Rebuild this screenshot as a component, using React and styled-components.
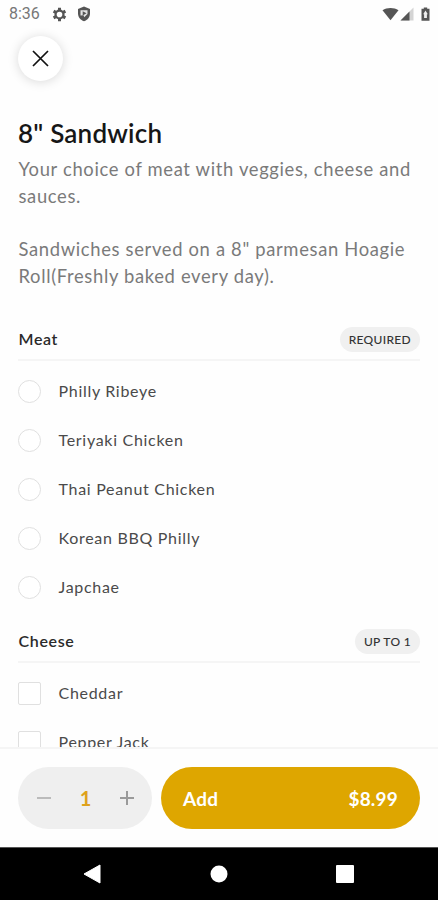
import React, { useState } from 'react';
import styled, { createGlobalStyle } from 'styled-components';

const meats = [
  'Philly Ribeye',
  'Teriyaki Chicken',
  'Thai Peanut Chicken',
  'Korean BBQ Philly',
  'Japchae',
];

const cheeses = ['Cheddar', 'Pepper Jack'];

const PRICE = 8.99;

const GlobalStyle = createGlobalStyle`
  * {
    box-sizing: border-box;
  }

  body {
    margin: 0;
    background: #fefefe;
    font-family: Lato, 'Liberation Sans', sans-serif;
  }

  button {
    border: 0;
    padding: 0;
    background: none;
    font-family: inherit;
    cursor: pointer;
  }
`;

const Screen = styled.div`
  display: flex;
  flex-direction: column;
  height: 900px;
  overflow: hidden;
  background: #fefefe;
`;

const StatusBar = styled.div`
  display: flex;
  align-items: center;
  justify-content: space-between;
  flex: none;
  height: 28px;
  padding: 0 8px 0 9px;
  color: #555;
`;

const StatusGroup = styled.div`
  display: flex;
  align-items: center;
  gap: ${({ $gap }) => $gap}px;
`;

const Clock = styled.span`
  width: 32px;
  font-family: Roboto, sans-serif;
  font-size: 16px;
  line-height: 30px;
  color: #777;
`;

const Content = styled.main`
  flex: 1;
  min-height: 0;
  padding: 8px 18px 0;
  overflow: hidden;
`;

const CloseButton = styled.button`
  display: flex;
  align-items: center;
  justify-content: center;
  width: 45px;
  height: 45px;
  border-radius: 50%;
  background: #fff;
  box-shadow: 0 1px 11px rgba(0, 0, 0, 0.15);
`;

const Title = styled.h1`
  margin: 35px 0 0;
  font-size: 26px;
  font-weight: 600;
  line-height: 34px;
  letter-spacing: 0.2px;
  color: #161616;
`;

const Description = styled.p`
  margin: 6px -6px 0 0.5px;
  font-size: 18.4px;
  line-height: 26.8px;
  letter-spacing: 0.66px;
  white-space: pre-line;
  color: #7a7a7a;
`;

const SectionHeader = styled.div`
  display: flex;
  align-items: center;
  justify-content: space-between;
  height: 41px;
  margin-top: ${({ $top }) => $top}px;
  border-bottom: 2px solid #f5f5f5;
`;

const SectionTitle = styled.h2`
  margin: -1px 0 0 0.5px;
  font-size: 16px;
  font-weight: 600;
  letter-spacing: 0.65px;
  color: #2a2a2a;
`;

const Badge = styled.span`
  display: flex;
  align-items: center;
  height: 25px;
  padding: 0 9px;
  border-radius: 13px;
  background: #f0f0f0;
  font-size: 12px;
  font-weight: 500;
  letter-spacing: 0.32px;
  color: #333;
`;

const OptionList = styled.div`
  padding-top: 6px;
  margin-bottom: 1px;
`;

const OptionRow = styled.label`
  display: flex;
  align-items: center;
  height: 49px;
  cursor: pointer;
`;

const OptionName = styled.span`
  padding-bottom: 2px;
  font-size: 16px;
  letter-spacing: 0.7px;
  color: #4a4a4a;
`;

const Control = styled.input`
  appearance: none;
  flex: none;
  width: 23px;
  height: 23px;
  margin: 0 17.5px 0 0;
  border: 1.5px solid #e0e0e0;
  border-radius: ${({ type }) => (type === 'radio' ? '50%' : '2px')};
  background: #fff;

  &:checked {
    border: 6px solid #dea600;
  }
`;

const Footer = styled.footer`
  display: flex;
  gap: 9px;
  flex: none;
  height: 100px;
  padding: 18px 18px 0;
  border-top: 2px solid #f5f5f5;
`;

const Stepper = styled.div`
  display: flex;
  align-items: center;
  justify-content: space-between;
  width: 134px;
  height: 62px;
  padding: 0 17px 0 18px;
  border-radius: 31px;
  background: #efefef;
`;

const StepButton = styled.button`
  display: flex;
  color: ${({ $muted }) => ($muted ? '#bbb' : '#9a9a9a')};
`;

const Quantity = styled.span`
  font-size: 20px;
  font-weight: 700;
  color: #dea21c;
`;

const AddButton = styled.button`
  display: flex;
  flex: 1;
  align-items: center;
  justify-content: space-between;
  height: 62px;
  padding: 0 22px;
  border-radius: 31px;
  background: #dea600;
  font-size: 19px;
  font-weight: 700;
  letter-spacing: 0.2px;
  color: #fff;
`;

const NavBar = styled.nav`
  display: flex;
  align-items: center;
  justify-content: space-between;
  flex: none;
  height: 53px;
  padding: 0 84px 0 83px;
  border-top: 1px solid #555;
  background: #000;
`;

const GearIcon = () => (
  <svg width="15" height="15" viewBox="0 0 16 16" fill="none" stroke="currentColor">
    <circle cx="8" cy="8" r="4.2" strokeWidth="2.4" />
    <path
      d="M8 .8v3M8 12.200v3M1.700 4.400l2.800 1.600M11.500 10l2.800 1.600M1.700 11.600l2.800-1.600M11.500 6l2.800-1.600"
      strokeWidth="3.2"
    />
  </svg>
);

const ShieldIcon = () => (
  <svg width="14" height="16" viewBox="0 0 14 16">
    <path d="M7 .6l6 2.300v4.600c0 3.600-2.400 6.400-6 7.800-3.600-1.400-6-4.200-6-7.800V2.900z" fill="currentColor" />
    <path d="M3.500 4.200h7v3.800L7.300 11.300l-.8-2.100-3 .2z" fill="#e4e4e4" />
    <path d="M5.700 5.200l3.800 2-3.800 2.300z" fill="currentColor" />
  </svg>
);

const WifiIcon = () => (
  <svg width="17" height="14" viewBox="0 0 17 14" fill="currentColor">
    <path d="M.5 3.300C5 .2 12 .2 16.500 3.300L8.500 13.300z" />
  </svg>
);

const SignalIcon = () => (
  <svg width="14" height="14" viewBox="0 0 14 14">
    <path d="M13.500.5v13H.5z" fill="#d4d4d4" />
    <path d="M9.500 4.500v9H.5z" fill="currentColor" />
  </svg>
);

const BatteryIcon = () => (
  <svg width="9" height="14" viewBox="0 0 9 14">
    <path d="M2.800.5h3.400v1.300H8.500v12H.5v-12h2.300z" fill="currentColor" />
    <path d="M4.500 3.500L6.800 7.300H5.900v3.700H3.100V7.300H2.200z" fill="#eee" />
  </svg>
);

const Options = ({ name, type, items }) => (
  <OptionList>
    {items.map(item => (
      <OptionRow key={item}>
        <Control type={type} name={name} />
        <OptionName>{item}</OptionName>
      </OptionRow>
    ))}
  </OptionList>
);

const App = () => {
  const [quantity, setQuantity] = useState(1);

  return (
    <Screen>
      <GlobalStyle />
      <StatusBar>
        <StatusGroup $gap={11}>
          <Clock>8:36</Clock>
          <StatusGroup $gap={10}>
            <GearIcon />
            <ShieldIcon />
          </StatusGroup>
        </StatusGroup>
        <StatusGroup $gap={7}>
          <StatusGroup $gap={1}>
            <WifiIcon />
            <SignalIcon />
          </StatusGroup>
          <BatteryIcon />
        </StatusGroup>
      </StatusBar>

      <Content>
        <CloseButton aria-label="Close">
          <svg width="17" height="17" viewBox="0 0 17 17" stroke="#111" strokeWidth="1.7">
            <path d="M1 1l15 15M16 1L1 16" />
          </svg>
        </CloseButton>
        <Title>8&quot; Sandwich</Title>
        <Description>
          {'Your choice of meat with veggies, cheese and sauces.\n\nSandwiches served on a 8" parmesan Hoagie Roll(Freshly baked every day).'}
        </Description>

        <SectionHeader $top={30}>
          <SectionTitle>Meat</SectionTitle>
          <Badge>REQUIRED</Badge>
        </SectionHeader>
        <Options name="meat" type="radio" items={meats} />

        <SectionHeader $top={10}>
          <SectionTitle>Cheese</SectionTitle>
          <Badge>UP TO 1</Badge>
        </SectionHeader>
        <Options name="cheese" type="checkbox" items={cheeses} />
      </Content>

      <Footer>
        <Stepper>
          <StepButton
            $muted={quantity === 1}
            aria-label="Remove one"
            onClick={() => setQuantity(Math.max(1, quantity - 1))}
          >
            <svg width="16" height="16" viewBox="0 0 16 16" stroke="currentColor" strokeWidth="2">
              <path d="M1 8h14" />
            </svg>
          </StepButton>
          <Quantity>{quantity}</Quantity>
          <StepButton aria-label="Add one" onClick={() => setQuantity(quantity + 1)}>
            <svg width="16" height="16" viewBox="0 0 16 16" stroke="currentColor" strokeWidth="2">
              <path d="M1 8h14M8 1v14" />
            </svg>
          </StepButton>
        </Stepper>
        <AddButton>
          <span>Add</span>
          <span>${(PRICE * quantity).toFixed(2)}</span>
        </AddButton>
      </Footer>

      <NavBar>
        <svg width="18" height="20" viewBox="0 0 18 20" fill="#fff">
          <path d="M17 1v18L1 10z" stroke="#fff" strokeLinejoin="round" />
        </svg>
        <svg width="18" height="18" viewBox="0 0 18 18" fill="#fff">
          <circle cx="9" cy="9" r="8.500" />
        </svg>
        <svg width="18" height="18" viewBox="0 0 18 18" fill="#fff">
          <rect width="18" height="18" rx="1" />
        </svg>
      </NavBar>
    </Screen>
  );
};

export default App;
